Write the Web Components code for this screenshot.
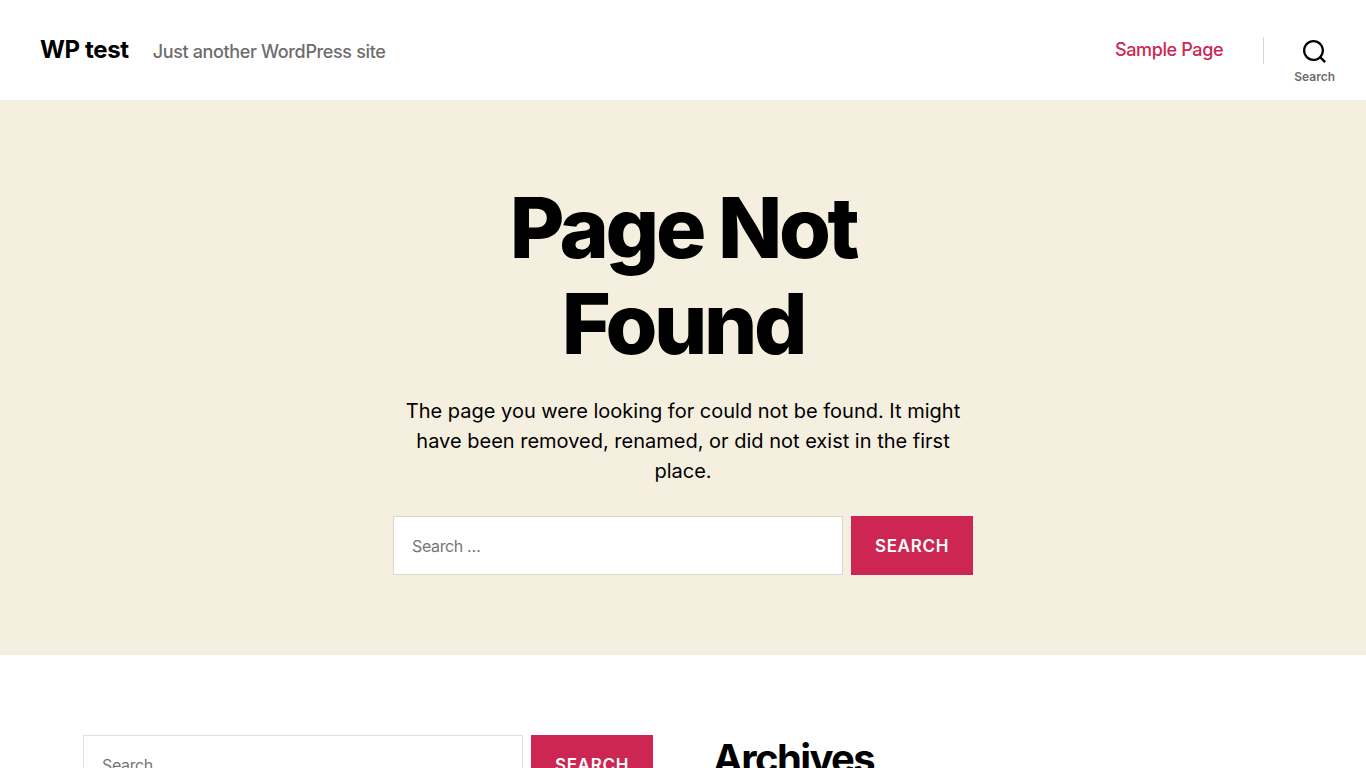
<!DOCTYPE html>
<html lang="en">
  <head>
    <meta charset="UTF-8" />
    <meta name="viewport" content="width=device-width, initial-scale=1.0" />
    <title>Page not found - WP test</title>
    <style>
      body {
        --accent: #cd2653;
        --background: #f5efe0;
        --secondary: #6d6d6d;
        --border: #dcd7ca;
        --heading-spacing: -0.04em;
        margin: 0;
        background: #fff;
        color: #000;
        font-family: Inter, "Liberation Sans", sans-serif;
        font-size: 18px;
        letter-spacing: -0.02em;
      }
    </style>
  </head>

  <body>
    <site-header>
      <a slot="title" href="#">WP test</a>
      <span slot="tagline">Just another WordPress site</span>
      <nav-link slot="menu" href="#sample">Sample Page</nav-link>
    </site-header>
    <not-found>
      <span slot="heading">Page Not Found</span>
      <span slot="text">The page you were looking for could not be found. It might have been removed, renamed, or did not exist in the first place.</span>
      <search-form label="404 not found"></search-form>
    </not-found>
    <footer-widgets>
      <search-form label="Search for:"></search-form>
      <widget-title slot="second">Archives</widget-title>
    </footer-widgets>

    <template id="site-header">
      <style>
        :host {
          display: block;
          background: #fff;
        }
        header {
          display: flex;
          align-items: stretch;
          justify-content: space-between;
          min-height: 100px;
          padding-left: 40px;
        }
        .titles {
          display: flex;
          align-items: baseline;
          gap: 24px;
          padding-top: 35px;
        }
        ::slotted(a) {
          color: #000;
          font-size: 24px;
          font-weight: 700;
          line-height: 30px;
          text-decoration: none;
        }
        .tagline {
          color: var(--secondary);
          font-size: 18px;
          font-weight: 500;
        }
        .navigation {
          display: flex;
          align-items: center;
        }
        .toggle-wrap {
          display: flex;
          align-items: center;
          align-self: stretch;
          margin-left: 40px;
        }
        .toggle-wrap::before {
          content: "";
          width: 1px;
          height: 27px;
          background: var(--border);
        }
        button {
          align-self: stretch;
          display: flex;
          flex-direction: column;
          align-items: center;
          gap: 8px;
          padding: 40px 31px 0 30px;
          border: 0;
          background: none;
          color: var(--secondary);
          font: 600 12px/12px Inter, "Liberation Sans", sans-serif;
          cursor: pointer;
        }
        svg {
          display: block;
          width: 23px;
          height: 23px;
          color: #000;
        }
      </style>
      <header>
        <div class="titles">
          <slot name="title"></slot>
          <span class="tagline"><slot name="tagline"></slot></span>
        </div>
        <div class="navigation">
          <nav><slot name="menu"></slot></nav>
          <div class="toggle-wrap">
            <button type="button">
              <svg viewBox="0 0 23 23" fill="currentColor" aria-hidden="true">
                <path d="M38.710696,48.0601792 L43,52.3494831 L41.3494831,54 L37.0601792,49.710696 C35.2632422,51.1481185 32.9839107,52.0076499 30.5038249,52.0076499 C24.7027226,52.0076499 20,47.3049272 20,41.5038249 C20,35.7027226 24.7027226,31 30.5038249,31 C36.3049272,31 41.0076499,35.7027226 41.0076499,41.5038249 C41.0076499,43.9839107 40.1481185,46.2632422 38.710696,48.0601792 Z M36.3875844,47.1716785 C37.8030221,45.7026647 38.6734666,43.7048964 38.6734666,41.5038249 C38.6734666,36.9918565 35.0157934,33.3341833 30.5038249,33.3341833 C25.9918565,33.3341833 22.3341833,36.9918565 22.3341833,41.5038249 C22.3341833,46.0157934 25.9918565,49.6734666 30.5038249,49.6734666 C32.7048964,49.6734666 34.7026647,48.8030221 36.1716785,47.3875844 C36.2023931,47.347638 36.2360451,47.3092237 36.2726343,47.2726343 C36.3092237,47.2360451 36.347638,47.2023931 36.3875844,47.1716785 Z" transform="translate(-20 -31)" />
              </svg>
              <span>Search</span>
            </button>
          </div>
        </div>
      </header>
    </template>

    <template id="nav-link">
      <style>
        :host {
          display: block;
        }
        a {
          color: var(--accent);
          font-size: 18px;
          font-weight: 500;
          line-height: 24px;
          text-decoration: none;
        }
      </style>
      <a href="#"><slot></slot></a>
    </template>

    <template id="not-found">
      <style>
        :host {
          display: block;
          background: var(--background);
        }
        main {
          max-width: 580px;
          margin: 0 auto;
          padding: 80px 20px;
          text-align: center;
        }
        h1 {
          margin: 0 0 24px;
          font-size: 84px;
          font-weight: 800;
          line-height: 96px;
          letter-spacing: var(--heading-spacing);
        }
        p {
          margin: 0 0 30px;
          font-size: 20px;
          line-height: 30px;
          letter-spacing: normal;
        }
      </style>
      <main>
        <h1><slot name="heading"></slot></h1>
        <p><slot name="text"></slot></p>
        <slot></slot>
      </main>
    </template>

    <template id="search-form">
      <style>
        :host {
          display: block;
        }
        form {
          display: flex;
          gap: 8px;
        }
        label {
          display: flex;
          flex: 1;
        }
        input {
          box-sizing: border-box;
          width: 100%;
          min-width: 0;
          height: 59px;
          margin: 0;
          padding: 0 18px;
          border: 1px solid var(--border);
          border-radius: 0;
          background: #fff;
          color: #000;
          font: 16px Inter, "Liberation Sans", sans-serif;
          letter-spacing: inherit;
        }
        input::placeholder {
          color: #757575;
        }
        button {
          height: 59px;
          padding: 0 24px;
          border: 0;
          background: var(--accent);
          color: #fff;
          font: 600 17px Inter, "Liberation Sans", sans-serif;
          letter-spacing: 0.04em;
          text-transform: uppercase;
          cursor: pointer;
        }
      </style>
      <form role="search">
        <label><input type="search" placeholder="Search …" /></label>
        <button type="submit">Search</button>
      </form>
    </template>

    <template id="footer-widgets">
      <style>
        :host {
          --border: #dedfdf;
          display: block;
          background: #fff;
        }
        aside {
          display: grid;
          grid-template-columns: 1fr 1fr;
          gap: 60px;
          max-width: 1200px;
          margin: 0 auto;
          padding: 80px 40px;
        }
      </style>
      <aside>
        <div><slot></slot></div>
        <div><slot name="second"></slot></div>
      </aside>
    </template>

    <template id="widget-title">
      <style>
        :host {
          display: block;
        }
        h2 {
          margin: 0;
          font-size: 40px;
          font-weight: 700;
          line-height: 48px;
          letter-spacing: var(--heading-spacing);
        }
      </style>
      <h2><slot></slot></h2>
    </template>

    <script>
      class TemplateElement extends HTMLElement {
        constructor() {
          super();
          const template = document.getElementById(this.localName);
          this.attachShadow({ mode: "open" });
          this.shadowRoot.appendChild(template.content.cloneNode(true));
        }
      }

      class SiteHeader extends TemplateElement {}

      class NavLink extends TemplateElement {
        connectedCallback() {
          this.shadowRoot.querySelector("a").href = this.getAttribute("href");
        }
      }

      class NotFound extends TemplateElement {}

      class SearchForm extends TemplateElement {
        connectedCallback() {
          const input = this.shadowRoot.querySelector("input");
          input.setAttribute("aria-label", this.getAttribute("label"));
          this.shadowRoot.querySelector("form").addEventListener("submit", (e) => {
            e.preventDefault();
          });
        }
      }

      class FooterWidgets extends TemplateElement {}

      class WidgetTitle extends TemplateElement {}

      customElements.define("site-header", SiteHeader);
      customElements.define("nav-link", NavLink);
      customElements.define("not-found", NotFound);
      customElements.define("search-form", SearchForm);
      customElements.define("footer-widgets", FooterWidgets);
      customElements.define("widget-title", WidgetTitle);
    </script>
  </body>
</html>
